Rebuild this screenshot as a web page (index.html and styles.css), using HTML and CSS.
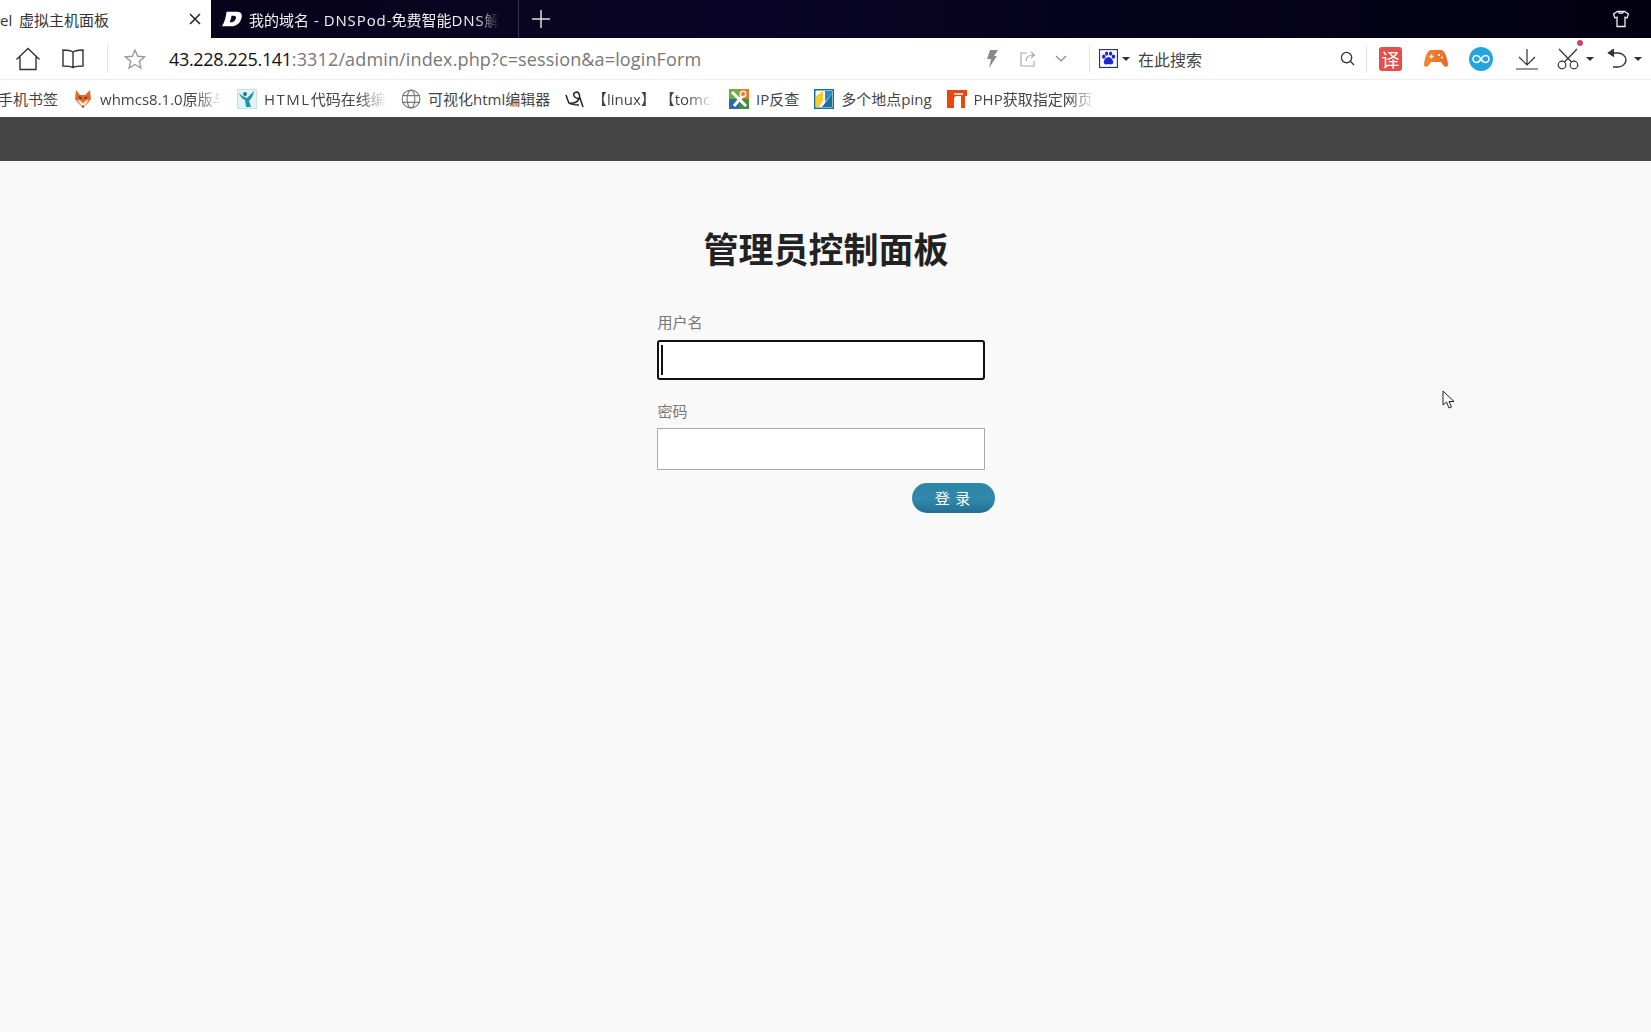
FILE: index.html
```html
<!DOCTYPE html>
<html lang="zh-CN">
<head>
<meta charset="utf-8">
<title>管理员控制面板</title>
<link rel="stylesheet" href="styles.css">
</head>
<body>
<header class="browser">
  <div class="tabstrip">
    <div class="tab tab-active">
      <span class="tab-title tab-title-active">el 虚拟主机面板</span>
      <svg class="tab-close" viewBox="0 0 12 12"><path d="M1 1l10 10M11 1L1 11"/></svg>
    </div>
    <div class="tab tab-dark">
      <svg class="tab-logo" viewBox="0 0 22 18"><path d="M5 1h11c5 0 6.500 2.500 5.500 6.500C20 13.500 16 17 10 17H0C2.500 13 4.500 7 5 1z" fill="#fff"/><path d="M10.500 5.500h2.500c2 0 2.800 1 2.300 2.700-.7 2.500-2.300 4.300-4.300 4.300H8.500c1-2.300 1.700-4.600 2-7z" fill="#0a0620"/></svg>
      <span class="tab-title tab-title-dark">我的域名 - <span class="wide">DNSPod</span>-免费智能<span class="wide">DNS</span>解</span>
    </div>
    <svg class="tab-plus" viewBox="0 0 18 18"><path d="M9 0v18M0 9h18"/></svg>
    <svg class="shirt" viewBox="0 0 18 18"><path d="M5.500 1.500h7l4 2.500-1.500 4-2-.8v9.300H5V7.200l-2 .8L1.500 4z"/><path d="M6.500 1.500c.5 2.500 4.500 2.500 5 0"/></svg>
  </div>

  <div class="toolbar">
    <svg class="ico home" viewBox="0 0 26 24"><path d="M1.500 12.500L13 1.500l11.500 11M5 10v12.500h16V10"/></svg>
    <svg class="ico book" viewBox="0 0 24 22"><path d="M12 4C9 2 5 2 2 2v16c3 0 7 0 10 1.500C15 18 19 18 22 18V2c-3 0-7 0-10 2zm0 0v16"/></svg>
    <span class="sep sep-nav"></span>
    <svg class="ico star" viewBox="0 0 22 22"><path d="M11 2l2.700 6.300 6.800.6-5.200 4.500 1.600 6.600-5.900-3.500-5.900 3.500 1.600-6.600L1.500 8.900l6.800-.6z"/></svg>
    <div class="url"><span class="url-host">43.228.225.141</span>:3312/admin/index.php?c=session&amp;a=loginForm</div>
    <svg class="ico bolt" viewBox="0 0 12 18"><path d="M4 0h8L8 6h3L3 18l2-9H1z"/></svg>
    <svg class="ico share" viewBox="0 0 18 18"><path d="M8 3H2v13h13v-5M7 11c0-4 3-6 8-6M12 2l3.500 3L12 8"/></svg>
    <svg class="ico chev" viewBox="0 0 12 8"><path d="M1 1l5 5 5-5"/></svg>
    <span class="sep sep-search"></span>
    <svg class="ico paw" viewBox="0 0 20 20"><rect x=".5" y=".5" width="19" height="19" fill="#fff" stroke="#23357f"/><g fill="#1c28d6"><ellipse cx="5" cy="8" rx="1.800" ry="2.300"/><ellipse cx="8" cy="4.800" rx="1.700" ry="2.300"/><ellipse cx="12.200" cy="4.800" rx="1.700" ry="2.300"/><ellipse cx="15.200" cy="8" rx="1.800" ry="2.300"/><path d="M10 8.500c2.500 0 5 3 5 5.500s-3 2.500-5 1.800c-2 .7-5 .7-5-1.800s2.500-5.500 5-5.500z"/></g></svg>
    <span class="caret caret-paw"></span>
    <span class="search-text">在此搜索</span>
    <svg class="ico search" viewBox="0 0 16 16"><circle cx="7" cy="7" r="5.500"/><path d="M11 11l4 4"/></svg>
    <span class="sep sep-ext"></span>
    <div class="ext-yi">译</div>
    <svg class="ico game" viewBox="0 0 24 19"><defs><linearGradient id="gm" x1="0" y1="0" x2="1" y2="0"><stop offset="0" stop-color="#f08a2c"/><stop offset="1" stop-color="#e9682a"/></linearGradient></defs><path d="M7 1h10c3 0 6 6 7 14 .3 3-3 4-5 1l-2-3H7l-2 3c-2 3-5.300 2-5-1C1 7 4 1 7 1z" fill="url(#gm)"/><path d="M5.500 7.500h4M7.500 5.500v4" stroke="#fff" stroke-width="1.400"/><circle cx="15" cy="6" r="1.100" fill="#fff"/><circle cx="18" cy="8.500" r="1.100" fill="#fff"/></svg>
    <svg class="ico inf" viewBox="0 0 24 24"><circle cx="12" cy="12" r="12" fill="#23a6e0"/><path d="M12 12c-2-3-3-3.500-4.500-3.500a3.500 3.500 0 0 0 0 7C9 15.500 10 15 12 12c2-3 3-3.500 4.500-3.500a3.500 3.500 0 0 1 0 7C15 15.500 14 15 12 12z" fill="none" stroke="#fff" stroke-width="1.500"/></svg>
    <svg class="ico down" viewBox="0 0 22 22"><path d="M11 1v15M3 9l8 8 8-8M0 21h22"/></svg>
    <div class="scissors-wrap">
      <svg class="ico scissors" viewBox="0 0 24 22"><circle cx="5" cy="17" r="3.800"/><circle cx="17" cy="17" r="3.800"/><path d="M7.500 14L20 1M14.500 14L2 1"/></svg>
      <span class="dot"></span>
    </div>
    <span class="caret caret-cut"></span>
    <svg class="ico undo" viewBox="0 0 22 20"><path d="M2 4h9c4 0 8 3 8 7s-4 7-8 7H6"/><path d="M7 0L1.500 4 7 7.500" fill="#333"/></svg>
    <span class="caret caret-undo"></span>
  </div>

  <nav class="bookmarks">
    <a class="bm"><span class="bm-text">手机书签</span></a>
    <a class="bm">
      <svg class="bm-ico" viewBox="0 0 20 20"><path d="M3 1l4 5h5l5-5 1 9-3 4-5 5-5-5-3-4z" fill="#dd6a2e"/><path d="M4 11c3 0 4 1 6 3 2-2 3-3 6-3l-6 8z" fill="#f8e6d2"/><path d="M6 8l2.500 1.500M14 8l-2.500 1.500" stroke="#3a2010" stroke-width="1.200"/><circle cx="10" cy="17.500" r="1" fill="#5a3418"/></svg>
      <span class="bm-text bm-fade">whmcs8.1.0原版与</span>
    </a>
    <a class="bm">
      <svg class="bm-ico" viewBox="0 0 20 20"><rect x=".5" y=".5" width="19" height="19" fill="#e2f3f7" stroke="#c6e2ea"/><path d="M2 4c3 3 5 4 8 5l7-7c-1 5-3 8-5 10l2 6h-5l-1-7C5 10 3 7 2 4z" fill="#1d93ad"/><circle cx="8" cy="5" r="2" fill="#14808f"/></svg>
      <span class="bm-text bm-fade"><span class="wide-html">HTML</span>代码在线编</span>
    </a>
    <a class="bm">
      <svg class="bm-ico globe" viewBox="0 0 18 18"><circle cx="9" cy="9" r="8"/><ellipse cx="9" cy="9" rx="3.500" ry="8"/><path d="M1 6h16M1 12h16"/></svg>
      <span class="bm-text bm-wide">可视化html编辑器</span>
    </a>
    <a class="bm">
      <svg class="bm-ico linuxi" viewBox="0 0 20 20"><path d="M1 6c1 3 2 6 3 8 5 1 8-1 10-4 1-2 1-6-2-7-3 0-4 2-3 4s4 3 6 2l3 9M4 14c3 2 7 2 10 2"/></svg>
      <span class="bm-text bm-fade">【linux】 【tomca</span>
    </a>
    <a class="bm">
      <svg class="bm-ico" viewBox="0 0 20 20"><rect width="10" height="10" fill="#6fae3a"/><rect x="10" width="10" height="10" fill="#e8792b"/><rect y="10" width="10" height="10" fill="#2d68b0"/><rect x="10" y="10" width="10" height="10" fill="#3f8f3b"/><path d="M3 3l14 14M15 5L5 17" stroke="#fff" stroke-width="3"/><circle cx="14" cy="5" r="3.500" fill="#f2f2f2"/><circle cx="14" cy="5" r="2" fill="#e8792b"/></svg>
      <span class="bm-text">IP反查</span>
    </a>
    <a class="bm">
      <svg class="bm-ico" viewBox="0 0 20 20"><rect x=".75" y=".75" width="18.500" height="18.500" fill="#fff" stroke="#1a6f9e" stroke-width="1.500"/><path d="M2 7l7-5v10l-4 6H2z" fill="#f2cf2a"/><path d="M8 18l10-13v13z" fill="#1a6f9e"/><path d="M11 2h7v3l-7 8z" fill="#2a8dc0"/></svg>
      <span class="bm-text">多个地点ping</span>
    </a>
    <a class="bm">
      <svg class="bm-ico" viewBox="0 0 20 20"><path d="M0 1h20v6h-2v12h-4V7h-4c-2 0-3 1-3 3v9H0z" fill="#e8470f"/><path d="M7 5h9" stroke="#fff" stroke-width="1.500"/></svg>
      <span class="bm-text bm-fade">PHP获取指定网页</span>
    </a>
  </nav>
</header>

<div class="topbar"></div>

<main class="page">
  <h1 class="title">管理员控制面板</h1>
  <form class="login">
    <label class="label">用户名</label>
    <div class="focus-wrap"><input class="input input-focus" type="text"></div>
    <label class="label label-pass">密码</label>
    <input class="input" type="password">
    <div class="actions"><button class="submit" type="button">登 录</button></div>
  </form>
</main>

<svg class="cursor" viewBox="0 0 13 20"><path d="M1 1v14l3.500-3 2.500 6 2.500-1-2.500-5.500h5z" fill="#fff" stroke="#222" stroke-width="1"/></svg>
</body>
</html>
```

FILE: styles.css
```css
* { box-sizing: border-box; }
html, body { margin: 0; height: 100%; }
body {
  height: 1032px;
  overflow: hidden;
  background: #f9f9f9;
  font-family: "Noto Sans CJK SC", "Noto Sans", sans-serif;
  display: flex;
  flex-direction: column;
  position: relative;
}
.browser { flex: none; }

/* tab strip */
.tabstrip {
  height: 38px;
  display: flex;
  align-items: center;
  background: linear-gradient(90deg, #070318 0%, #0a0526 45%, #05021c 70%, #020010 100%);
}
.tab { height: 38px; display: flex; align-items: center; flex: none; }
.tab-active { width: 211px; background: #fff; padding-right: 10px; justify-content: space-between; }
.tab-title { font-family: "Open Sans", "Noto Sans CJK SC", sans-serif; font-size: 15px; white-space: nowrap; }
.tab-title-active { color: #333; word-spacing: 3px; }
.tab-close { width: 12px; height: 12px; fill: none; stroke: #222; stroke-width: 1.500; }
.tab-dark { width: 308px; padding-left: 11px; gap: 7px; border-right: 1px solid #3a3650; }
.tab-logo { width: 20px; height: 18px; flex: none; }
.tab-title-dark {
  color: #f2f2f2;
  width: 250px;
  word-spacing: 1px;
  -webkit-mask-image: linear-gradient(90deg, #000 91%, transparent 100%);
  mask-image: linear-gradient(90deg, #000 91%, transparent 100%);
}
.wide { letter-spacing: .9px; }
.tab-plus { width: 18px; height: 18px; margin-left: 13px; fill: none; stroke: #ddd; stroke-width: 1.500; }
.shirt { width: 18px; height: 18px; margin-left: auto; margin-right: 21px; fill: none; stroke: #f0f0f0; stroke-width: 1.300; }

/* toolbar */
.toolbar {
  height: 42px;
  background: #fff;
  display: flex;
  align-items: center;
  border-bottom: 1px solid #ececec;
  color: #333;
}
.ico { flex: none; fill: none; stroke: #333; stroke-width: 1.400; }
.home { width: 26px; height: 24px; margin-left: 15px; }
.book { width: 24px; height: 22px; margin-left: 20px; }
.sep { flex: none; width: 1px; height: 28px; background: #e4e4e4; }
.sep-nav { margin-left: 22px; }
.star { width: 22px; height: 22px; margin-left: 16px; stroke: #9a9a9a; }
.url {
  margin-left: 23px;
  width: 533px;
  flex: none;
  font-family: "Open Sans", sans-serif;
  font-size: 18px;
  letter-spacing: .14px;
  color: #777;
  white-space: nowrap;
}
.url-host { color: #111; letter-spacing: -.33px; }
.bolt { width: 12px; height: 18px; margin-left: 284px; fill: #8a8a8a; stroke: none; }
.share { width: 18px; height: 18px; margin-left: 21px; stroke: #aaa; stroke-width: 1.200; }
.chev { width: 12px; height: 8px; margin-left: 18px; stroke: #888; stroke-width: 1.200; }
.sep-search { margin-left: 22px; }
.paw { width: 19px; height: 19px; margin-left: 9px; stroke: none; }
.caret { flex: none; width: 0; height: 0; border: 4px solid transparent; border-top-color: #333; border-bottom-width: 0; }
.caret-paw { margin-left: 4px; }
.search-text { margin-left: 8px; width: 65px; flex: none; font-size: 16px; color: #444; white-space: nowrap; }
.search { width: 15px; height: 15px; margin-left: 137px; }
.sep-ext { margin-left: 11px; }
.ext-yi {
  flex: none;
  width: 23px;
  height: 24px;
  margin-left: 12px;
  border-radius: 3px;
  background: #e2504b;
  color: #fff;
  font-size: 18px;
  line-height: 24px;
  text-align: center;
}
.game { width: 24px; height: 19px; margin-left: 22px; stroke: none; }
.inf { width: 24px; height: 24px; margin-left: 21px; stroke: none; }
.down { width: 22px; height: 22px; margin-left: 23px; stroke-width: 1.200; }
.scissors-wrap { position: relative; flex: none; width: 24px; height: 22px; margin-left: 19px; }
.scissors { width: 24px; height: 22px; display: block; stroke-width: 1.200; }
.dot { position: absolute; top: -8px; right: -2px; width: 6px; height: 6px; border-radius: 50%; background: #d0466a; }
.caret-cut { margin-left: 5px; }
.undo { width: 22px; height: 20px; margin-left: 13px; }
.caret-undo { margin-left: 5px; }

/* bookmarks */
.bookmarks {
  height: 37px;
  background: #fff;
  display: flex;
  align-items: center;
  gap: 15px;
  margin-left: -2px;
  overflow: hidden;
}
.bm { display: flex; align-items: center; gap: 7px; flex: none; }
.bm-ico { width: 20px; height: 20px; flex: none; }
.globe { fill: none; stroke: #777; stroke-width: 1; }
.linuxi { fill: none; stroke: #222; stroke-width: 1.500; }
.bm-text { font-family: "Open Sans", "Noto Sans CJK SC", sans-serif; font-size: 15px; color: #444; white-space: nowrap; }
.bm-fade {
  width: 122px;
  -webkit-mask-image: linear-gradient(90deg, #000 78%, transparent 100%);
  mask-image: linear-gradient(90deg, #000 78%, transparent 100%);
}
.wide-html { letter-spacing: 1.500px; }
.bm-wide { width: 122px; }

/* dark bar */
.topbar { flex: none; height: 44px; background: #444; }

/* login page */
.page { flex: 1; padding-top: 61px; display: flex; flex-direction: column; align-items: center; }
.title { margin: 0 0 0 1px; font-size: 35px; line-height: 52px; font-weight: 700; color: #222; }
.login { width: 328px; margin: 37px 0 0 -10px; display: flex; flex-direction: column; }
.label { font-size: 15px; line-height: 22px; color: #777; padding-left: 1px; }
.label-pass { margin-top: 20px; }
.focus-wrap { position: relative; margin-top: 7px; display: flex; }
.focus-wrap::after {
  content: "";
  position: absolute;
  left: 4px;
  top: 5px;
  bottom: 5px;
  width: 2px;
  background: #111;
}
.input { width: 328px; height: 42px; background: #fff; border: 1px solid #aaa; padding: 0 4px; outline: none; margin-top: 6px; }
.input-focus { height: 40px; margin-top: 0; border: 2px solid #111; border-radius: 3px; }
.actions { display: flex; justify-content: flex-end; margin: 13px -10px 0 0; }
.submit {
  width: 83px;
  height: 30px;
  padding: 0 0 2px;
  border: 0;
  border-radius: 15px;
  background: linear-gradient(180deg, #2c86a9 0%, #3089ac 55%, #226f91 100%);
  color: #fff;
  font-family: inherit;
  font-size: 15px;
  letter-spacing: 1px;
}
.cursor { position: absolute; left: 1442px; top: 390px; width: 13px; height: 20px; }
```
